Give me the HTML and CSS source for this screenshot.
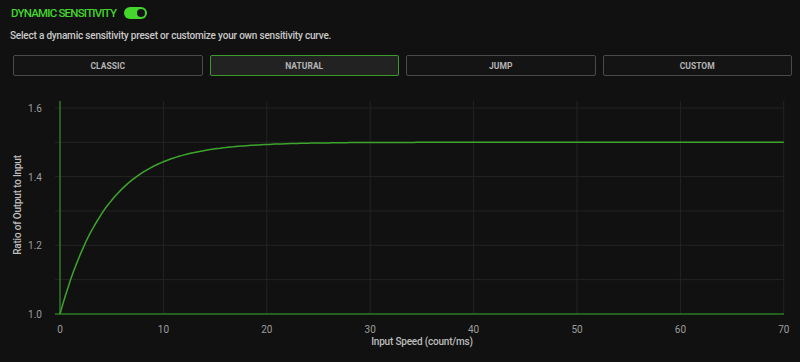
FILE: index.html
```html
<!DOCTYPE html>
<html lang="en">
<head>
    <meta charset="UTF-8">
    <meta name="viewport" content="width=device-width, initial-scale=1.0">
    <title>Dynamic Sensitivity</title>
    <link rel="stylesheet" href="styles.css">
</head>
<body>
    <div class="panel">
        <div class="header">
            <span class="title">Dynamic Sensitivity</span>
            <span class="toggle on"><span class="knob"></span></span>
        </div>

        <p class="subtitle">Select a dynamic sensitivity preset or customize your own sensitivity curve.</p>

        <div class="presets">
            <button class="preset">Classic</button>
            <button class="preset active">Natural</button>
            <button class="preset">Jump</button>
            <button class="preset">Custom</button>
        </div>

        <!-- the curve chart, drawn in page coordinates -->
        <svg class="chart" id="chart" viewBox="0 76 800 286" width="800" height="286">
            <g id="grid" class="grid"></g>
            <line class="axis" x1="60" y1="101" x2="60" y2="314"></line>
            <line class="axis" x1="55" y1="314" x2="784" y2="314"></line>
            <g id="labels" class="tick"></g>
            <path id="curve" class="curve"></path>
            <text class="axis-title" x="422" y="345" text-anchor="middle">Input Speed (count/ms)</text>
            <text class="axis-title" x="21" y="205" text-anchor="middle" transform="rotate(-90 21 205)">Ratio of Output to Input</text>
        </svg>
    </div>

    <script>
        // chart scale
        const x0 = 60, y0 = 314;
        const pxPerX = 10.34;   // px per count/ms
        const pxPerY = 343.5;   // px per 1.0 of ratio
        const NS = 'http://www.w3.org/2000/svg';

        function el(tag, attrs, text) {
            const e = document.createElementNS(NS, tag);
            for (const k in attrs) e.setAttribute(k, attrs[k]);
            if (text) e.textContent = text;
            return e;
        }

        const grid = document.getElementById('grid');
        const labels = document.getElementById('labels');

        // horizontal lines every 0.1
        for (let i = 1; i <= 6; i++) {
            const y = y0 - i * 0.1 * pxPerY;
            grid.appendChild(el('line', { x1: 55, y1: y, x2: 784, y2: y }));
        }
        // y labels every 0.2
        [1.0, 1.2, 1.4, 1.6].forEach(v => {
            const y = y0 - (v - 1) * pxPerY;
            labels.appendChild(el('text', { x: 42, y: y + 4, 'text-anchor': 'end' }, v.toFixed(1)));
        });
        // vertical lines + x labels every 10
        for (let v = 0; v <= 70; v += 10) {
            const x = x0 + v * pxPerX;
            if (v > 0) grid.appendChild(el('line', { x1: x, y1: 101, x2: x, y2: 314 }));
            labels.appendChild(el('text', { x: x, y: 333, 'text-anchor': 'middle' }, String(v)));
        }

        // natural curve: eases from 1.0 up to 1.5
        let d = '';
        for (let v = 0; v <= 70; v += 0.25) {
            const r = 1 + 0.5 * (1 - Math.exp(-v / 4.6));
            const x = x0 + v * pxPerX;
            const y = y0 - (r - 1) * pxPerY;
            d += (d ? ' L' : 'M') + x.toFixed(1) + ' ' + y.toFixed(1);
        }
        document.getElementById('curve').setAttribute('d', d);
    </script>
</body>
</html>
```

FILE: styles.css
```css
:root {
    --razer-green: #44d62c;
    --bg: #111111;
}

body {
    margin: 0;
    background: var(--bg);
    font-family: Roboto, "Liberation Sans", sans-serif;
    overflow: hidden;
}

.panel {
    padding: 6px 8px 0 13px;
}

.header {
    display: flex;
    align-items: center;
    gap: 8px;
    height: 14px;
    margin-left: -2px;
}

.title {
    color: var(--razer-green);
    font-size: 11.5px;
    font-weight: 500;
    letter-spacing: -0.8px;
    text-transform: uppercase;
}

/* little switch */
.toggle {
    display: flex;
    justify-content: flex-end;
    align-items: center;
    width: 23px;
    height: 12px;
    padding: 0 2px;
    box-sizing: border-box;
    border-radius: 6px;
    background: var(--razer-green);
}

.knob {
    width: 8px;
    height: 8px;
    border-radius: 50%;
    background: #141414;
}

.subtitle {
    margin: 9px 0 0 -3px;
    color: #c9c9c9;
    font-size: 10px;
    font-weight: 500;
    line-height: 14px;
    letter-spacing: -0.2px;
}

.presets {
    display: grid;
    grid-template-columns: repeat(4, 1fr);
    gap: 7px;
    margin-top: 12px;
}

.preset {
    height: 21px;
    background: #141414;
    border: 1.5px solid #4a4a4a;
    border-radius: 2px;
    color: #b4b4b4;
    font-family: Roboto, sans-serif;
    font-size: 8.5px;
    font-weight: 700;
    text-transform: uppercase;
    cursor: pointer;
}

.preset.active {
    background: #222222;
    border-color: #3c9a2c;
}

/* chart */
.chart {
    display: block;
    margin-left: -13px;
}

.grid line {
    stroke: #242424;
    stroke-width: 1;
}

.axis {
    stroke: #2b7a22;
    stroke-width: 1.5;
}

.curve {
    fill: none;
    stroke: #3ea52c;
    stroke-width: 1.5;
}

.tick text {
    fill: #9d9d9d;
    font-size: 10px;
}

.axis-title {
    fill: #bdbdbd;
    font-size: 10px;
    font-weight: 500;
    letter-spacing: -0.2px;
}
```
